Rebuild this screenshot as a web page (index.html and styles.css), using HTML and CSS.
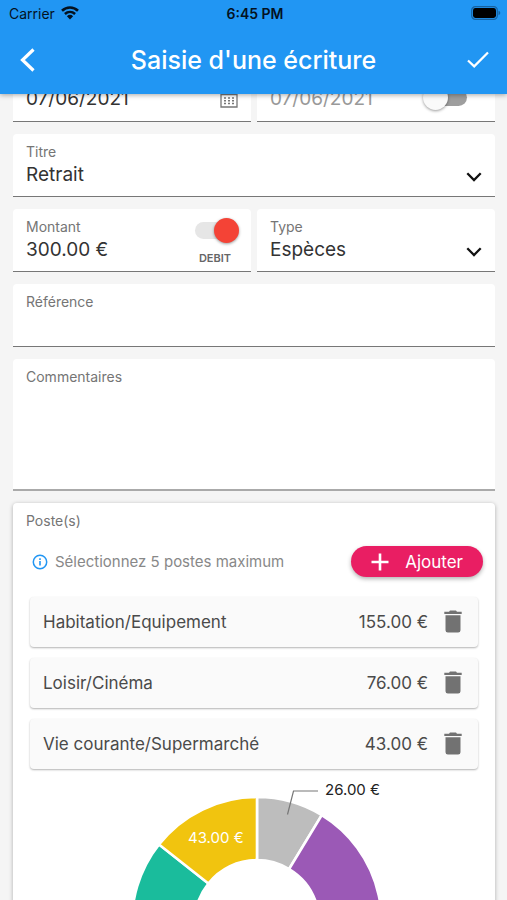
FILE: index.html
```html
<!DOCTYPE html>
<html lang="fr">
<head>
<meta charset="utf-8">
<meta name="viewport" content="width=device-width, initial-scale=1">
<title>Saisie d'une écriture</title>
<link rel="stylesheet" href="styles.css">
</head>
<body>
<div class="app">
  <header class="header">
    <div class="status">
      <div class="status-left">
        <span>Carrier</span>
        <svg width="18" height="14" viewBox="0 0 18 14" aria-hidden="true"><path d="M1 4.8C5.6.4 12.4.4 17 4.8" fill="none" stroke="#04121f" stroke-width="2.6"/><path d="M3.9 8C6.9 5.2 11.1 5.2 14.1 8" fill="none" stroke="#04121f" stroke-width="2.5"/><path d="M5.9 10.2Q9 7.5 12.1 10.2L9 13.5Z" fill="#04121f"/></svg>
      </div>
      <span class="status-time">6:45 PM</span>
      <div class="status-right">
        <svg width="30" height="14" viewBox="0 0 30 14" aria-hidden="true"><rect x=".7" y=".7" width="25.6" height="12.6" rx="3.6" fill="none" stroke="#1762a0" stroke-width="1.2"/><rect x="2" y="2" width="23" height="10" rx="2.4" fill="#000"/><path d="M27.5 4.8Q29.3 5.4 29.3 7T27.5 9.2Z" fill="#1762a0"/></svg>
      </div>
    </div>
    <div class="toolbar">
      <button class="icon-button" type="button" aria-label="Retour">
        <svg width="18" height="26" viewBox="0 0 18 26"><path d="M15.5 2.5L4.5 13L15.5 23.5" fill="none" stroke="#fff" stroke-width="3.2"/></svg>
      </button>
      <h1 class="title">Saisie d'une écriture</h1>
      <button class="icon-button icon-button-end" type="submit" form="entry" aria-label="Valider">
        <svg width="22" height="18" viewBox="0 0 22 18"><path d="M1 9.5L7.2 15.4L21 1.5" fill="none" stroke="#fff" stroke-width="2.2"/></svg>
      </button>
    </div>
  </header>

  <form class="form" id="entry">
    <div class="columns">
      <div class="field field-date">
        <input class="value" type="text" value="07/06/2021" aria-label="Date">
        <svg class="calendar" width="18" height="20" viewBox="0 0 18 20" aria-hidden="true"><path d="M1 3.5H17V19H1ZM1 6.5H17M4.5 1V3.5M13.5 1V3.5" fill="none" stroke="#777" stroke-width="1.3"/><path d="M4 10H14M4 12.7H14M4 15.4H14" fill="none" stroke="#777" stroke-width="1.5" stroke-dasharray="2 2"/></svg>
      </div>
      <div class="field field-date">
        <input class="value value-muted" type="text" value="07/06/2021" aria-label="Date de pointage">
        <input class="switch switch-date" type="checkbox" aria-label="Pointage">
      </div>
    </div>

    <div class="field">
      <label class="label" for="name">Titre</label>
      <select class="value" id="name"><option>Retrait</option></select>
      <svg class="chevron" width="16" height="10" viewBox="0 0 16 10" aria-hidden="true"><path d="M1.3 1.3L8 8L14.7 1.3" fill="none" stroke="#111" stroke-width="2.3"/></svg>
    </div>

    <div class="columns">
      <div class="field">
        <label class="label" for="amount">Montant</label>
        <input class="value" id="amount" type="text" value="300.00 €">
        <label class="debit">
          <input class="switch switch-on" type="checkbox" checked>
          <span>DEBIT</span>
        </label>
      </div>
      <div class="field">
        <label class="label" for="type">Type</label>
        <select class="value" id="type"><option>Espèces</option></select>
        <svg class="chevron" width="16" height="10" viewBox="0 0 16 10" aria-hidden="true"><path d="M1.3 1.3L8 8L14.7 1.3" fill="none" stroke="#111" stroke-width="2.3"/></svg>
      </div>
    </div>

    <div class="field">
      <label class="label" for="reference">Référence</label>
      <input class="value" id="reference" type="text">
    </div>

    <div class="field field-tall">
      <label class="label" for="comments">Commentaires</label>
      <textarea class="value comments" id="comments"></textarea>
    </div>

    <section class="card">
      <h2 class="label">Poste(s)</h2>
      <div class="hint-row">
        <svg width="16" height="16" viewBox="0 0 16 16" aria-hidden="true"><circle cx="8" cy="8" r="6.7" fill="none" stroke="#2196f3" stroke-width="1.5"/><path d="M8 7V11.6M8 4.3V5.9" stroke="#2196f3" stroke-width="1.6"/></svg>
        <p class="hint">Sélectionnez 5 postes maximum</p>
        <button class="add" type="button">
          <svg width="18" height="18" viewBox="0 0 18 18" aria-hidden="true"><path d="M9 .5V17.5M.5 9H17.5" stroke="#fff" stroke-width="2.6"/></svg>
          <span>Ajouter</span>
        </button>
      </div>
      <ul class="items">
        <li class="item"><span class="item-name">Habitation/Equipement</span><span>155.00 €</span>
          <button class="delete" type="button" aria-label="Supprimer Habitation/Equipement"><svg width="18" height="24" viewBox="0 0 18 24"><path d="M.3 1.8H5L6 .6H12L13 1.8H17.7V4H.3ZM1.5 5.3H16.5V20.2Q16.5 22.6 14.1 22.6H3.9Q1.5 22.6 1.5 20.2Z" fill="#727272"/></svg></button></li>
        <li class="item"><span class="item-name">Loisir/Cinéma</span><span>76.00 €</span>
          <button class="delete" type="button" aria-label="Supprimer Loisir/Cinéma"><svg width="18" height="24" viewBox="0 0 18 24"><path d="M.3 1.8H5L6 .6H12L13 1.8H17.7V4H.3ZM1.5 5.3H16.5V20.2Q16.5 22.6 14.1 22.6H3.9Q1.5 22.6 1.5 20.2Z" fill="#727272"/></svg></button></li>
        <li class="item"><span class="item-name">Vie courante/Supermarché</span><span>43.00 €</span>
          <button class="delete" type="button" aria-label="Supprimer Vie courante/Supermarché"><svg width="18" height="24" viewBox="0 0 18 24"><path d="M.3 1.8H5L6 .6H12L13 1.8H17.7V4H.3ZM1.5 5.3H16.5V20.2Q16.5 22.6 14.1 22.6H3.9Q1.5 22.6 1.5 20.2Z" fill="#727272"/></svg></button></li>
      </ul>
      <svg class="chart" viewBox="0 0 482 290" role="img" aria-label="Répartition des postes">
        <g transform="translate(244 153)" stroke="#fff" stroke-width="2.6">
          <path d="M0 -125A125 125 0 0 1 64.8 -106.9L32.1 -53A62 62 0 0 0 0 -62Z" fill="#bdbdbd"/>
          <path d="M64.8 -106.9A125 125 0 1 1 -75.6 99.6L-37.5 49.4A62 62 0 1 0 32.1 -53Z" fill="#9b59b6"/>
          <path d="M-75.6 99.6A125 125 0 0 1 -98 -77.6L-48.6 -38.5A62 62 0 0 0 -37.5 49.4Z" fill="#1abc9c"/>
          <path d="M-98 -77.6A125 125 0 0 1 0 -125L0 -62A62 62 0 0 0 -48.6 -38.5Z" fill="#f1c40f"/>
        </g>
        <path d="M274.5 45.5L280.5 22H305" fill="none" stroke="#777" stroke-width="1.2"/>
        <text class="chart-label" x="312" y="26">26.00 €</text>
        <text class="chart-label chart-label-light" x="175" y="74">43.00 €</text>
      </svg>
    </section>
  </form>
</div>
</body>
</html>
```
FILE: styles.css
```css
* { box-sizing: border-box; }

body {
  margin: 0;
  background: #f5f5f5;
  color: #333;
  font-family: Inter, "Liberation Sans", sans-serif;
}

button, input, select, textarea { font: inherit; color: inherit; }

button {
  border: 0;
  padding: 0;
  background: none;
  cursor: pointer;
}

svg { display: block; flex: none; }

.app { height: 100vh; overflow: hidden; }

.header {
  position: relative;
  z-index: 2;
  background: #2196f3;
  color: #fff;
  padding-bottom: 6px;
  box-shadow: 0 1px 5px rgba(0, 0, 0, 0.35);
}

.status {
  display: grid;
  grid-template-columns: 1fr auto 1fr;
  align-items: center;
  height: 26px;
  padding: 0 6px 0 9px;
  color: #04121f;
  font-size: 14px;
}

.status-left { display: flex; align-items: center; gap: 6px; }
.status-time { font-weight: 600; }
.status-right { display: flex; justify-content: flex-end; }

.toolbar {
  display: grid;
  grid-template-columns: 48px 1fr 48px;
  align-items: center;
  height: 62px;
  padding: 6px 18px 0;
}

.icon-button { display: flex; align-items: center; height: 48px; }
.icon-button-end { justify-content: flex-end; }

.title {
  margin: 0;
  text-align: center;
  font-size: 25px;
  font-weight: 500;
}

.form {
  display: flex;
  flex-direction: column;
  gap: 12px;
  margin-top: -35px;
  padding: 0 12px 0 13px;
}

.columns {
  display: grid;
  grid-template-columns: 1fr 1fr;
  gap: 6px;
}

.field {
  position: relative;
  display: flex;
  flex-direction: column;
  height: 63px;
  padding: 9px 13px 0;
  border-bottom: 1px solid #777;
  border-radius: 4px 4px 0 0;
  background: #fff;
}

.field-date { padding-top: 26px; }
.field-tall { height: 132px; border-bottom: 2px solid #aaa; }

.label {
  margin: 0;
  color: #757575;
  font-size: 14px;
  font-weight: 400;
  line-height: 18px;
}

.value {
  appearance: none;
  width: 100%;
  height: 26px;
  padding: 0;
  border: 0;
  outline: 0;
  background: transparent;
  font-size: 19px;
}

.value-muted { color: #999; }
.comments { flex: 1; resize: none; }

.chevron {
  position: absolute;
  right: 13px;
  bottom: 14px;
  pointer-events: none;
}

.calendar { position: absolute; right: 13px; bottom: 13px; }

.switch {
  appearance: none;
  position: relative;
  width: 40px;
  height: 17px;
  margin: 0;
  border-radius: 9px;
  background: #9e9e9e;
}

.switch::before {
  content: "";
  position: absolute;
  top: -4px;
  left: -4px;
  width: 25px;
  height: 25px;
  border-radius: 50%;
  background: #fafafa;
  box-shadow: 0 1px 3px rgba(0, 0, 0, 0.4);
}

.switch-date { position: absolute; right: 28px; bottom: 15px; }
.switch-on { background: #e6e6e6; }
.switch-on::before { left: 19px; background: #f44336; }

.debit {
  position: absolute;
  top: 13px;
  right: 16px;
  display: flex;
  flex-direction: column;
  align-items: center;
  gap: 12px;
  color: #666;
  font-size: 11px;
  font-weight: 600;
  line-height: 14px;
}

.card {
  padding: 9px 0 0;
  border-radius: 4px;
  background: #fff;
  box-shadow: 0 1px 4px rgba(0, 0, 0, 0.3);
}

.card > .label { padding: 0 13px; }

.hint-row {
  display: flex;
  align-items: center;
  gap: 7px;
  padding: 16px 12px 20px 19px;
}

.hint { flex: 1; margin: 0; color: #888; font-size: 15px; }

.add {
  display: flex;
  align-items: center;
  gap: 16px;
  height: 31px;
  padding: 0 20px;
  border-radius: 16px;
  background: #e91e63;
  color: #fff;
  font-size: 17px;
  box-shadow: 0 2px 4px rgba(0, 0, 0, 0.3);
}

.items {
  display: flex;
  flex-direction: column;
  gap: 11px;
  margin: 0 17px;
  padding: 0;
  list-style: none;
}

.item {
  display: flex;
  align-items: center;
  height: 50px;
  padding: 0 16px 0 13px;
  border-radius: 4px;
  background: #fafafa;
  color: #4a4a4a;
  font-size: 17px;
  box-shadow: 0 1px 2px rgba(0, 0, 0, 0.3);
}

.item-name { flex: 1; }
.delete { margin-left: 16px; }

.chart { width: 100%; }
.chart-label { fill: #222; font-size: 15px; }
.chart-label-light { fill: #fff; }
```
